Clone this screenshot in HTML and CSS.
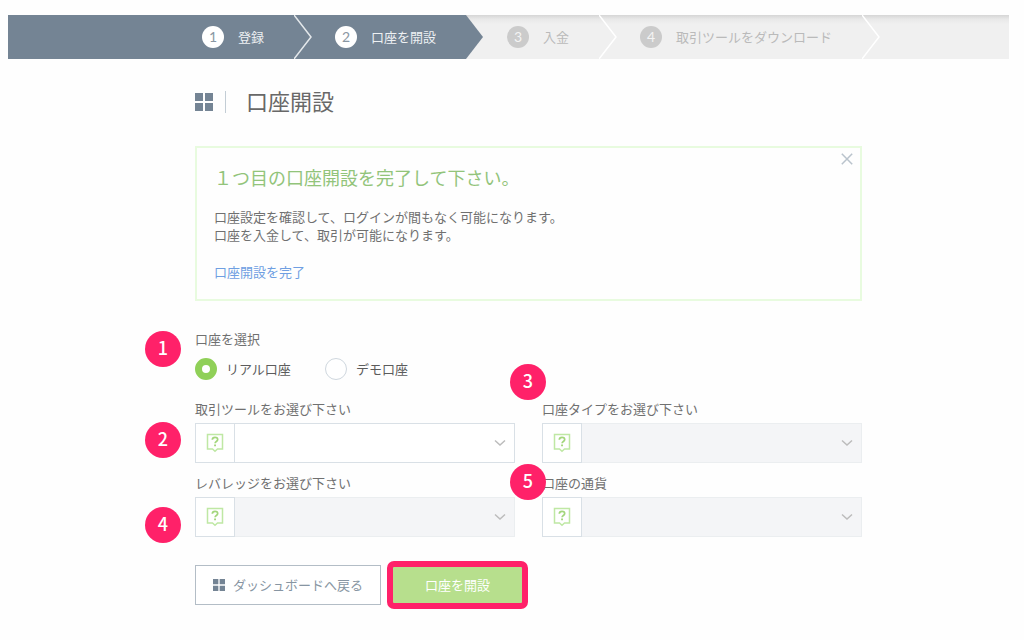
FILE: index.html
```html
<!DOCTYPE html>
<html lang="ja">
<head>
<meta charset="utf-8">
<meta name="viewport" content="width=device-width, initial-scale=1">
<title>口座開設</title>
<link rel="stylesheet" href="styles.css">
</head>
<body>
<svg class="sprite" aria-hidden="true">
  <symbol id="grid" viewBox="0 0 18 18"><path d="M0 0h8v8H0zM10 0h8v8h-8zM0 10h8v8H0zM10 10h8v8h-8z" fill="currentColor"/></symbol>
  <symbol id="help" viewBox="0 0 18 20"><path d="M1.500 1.500h15v14.500h-5L9 18.200 6.500 16h-5z" fill="none" stroke="currentColor" stroke-width="1.500"/><path d="M6.300 6.700C6.400 5.200 7.500 4.400 9 4.400c1.600 0 2.700.8 2.700 2.200 0 2-2.600 1.900-2.600 3.700" fill="none" stroke="#a3d67c" stroke-width="1.700"/><path d="M8.100 11.500h1.900v1.800H8.100z" fill="#a3d67c"/></symbol>
  <symbol id="down" viewBox="0 0 12 8"><path d="M1 1.500l5 4.500 5-4.500" fill="none" stroke="currentColor" stroke-width="1.500"/></symbol>
</svg>

<ol class="stepper">
  <li class="step step-active">
    <span class="step-body"><span class="step-number">1</span>登録</span>
    <svg class="step-arrow" viewBox="0 0 18 44"><path d="M0 0h18v44H0z" fill="#748494"/><path d="M0 0l17 22L0 44" fill="none" stroke="#e4e8eb" stroke-width="1.500"/></svg>
  </li>
  <li class="step step-active">
    <span class="step-body"><span class="step-number">2</span>口座を開設</span>
    <svg class="step-arrow" viewBox="0 0 18 44"><path d="M0 0l17 22L0 44z" fill="#748494"/></svg>
  </li>
  <li class="step">
    <span class="step-body"><span class="step-number">3</span>入金</span>
    <svg class="step-arrow" viewBox="0 0 18 44"><path d="M0 0l17 22L0 44" fill="none" stroke="#fff" stroke-width="1.500"/></svg>
  </li>
  <li class="step">
    <span class="step-body"><span class="step-number">4</span>取引ツールをダウンロード</span>
    <svg class="step-arrow" viewBox="0 0 18 44"><path d="M0 0l17 22L0 44" fill="none" stroke="#fff" stroke-width="1.500"/></svg>
  </li>
</ol>

<main class="content">
  <header class="page-head">
    <span class="head-mark"><svg><use href="#grid"/></svg></span>
    <h1 class="page-title">口座開設</h1>
  </header>

  <section class="notice">
    <h2 class="notice-title">１つ目の口座開設を完了して下さい。</h2>
    <p class="notice-text">口座設定を確認して、ログインが間もなく可能になります。<br>口座を入金して、取引が可能になります。</p>
    <a class="notice-link" href="#account-form">口座開設を完了</a>
    <button class="notice-close" type="button" aria-label="閉じる"><svg viewBox="0 0 12 12"><path d="M.8.8l10.400 10.400M11.200.8L.8 11.200" stroke="currentColor" stroke-width="1.500"/></svg></button>
  </section>

  <form id="account-form">
    <fieldset class="account-kind">
      <legend class="label">口座を選択</legend>
      <div class="radios">
        <label class="radio"><input type="radio" name="kind" checked>リアル口座</label>
        <label class="radio"><input type="radio" name="kind">デモ口座</label>
      </div>
      <span class="marker marker-kind">1</span>
    </fieldset>

    <div class="fields">
      <div class="field">
        <label class="label" for="tool">取引ツールをお選び下さい</label>
        <div class="control">
          <button class="help" type="button" aria-label="ヘルプ"><svg><use href="#help"/></svg></button>
          <select class="select" id="tool"><option></option></select>
          <svg class="caret"><use href="#down"/></svg>
        </div>
        <span class="marker marker-tool">2</span>
      </div>
      <div class="field">
        <label class="label" for="type">口座タイプをお選び下さい</label>
        <div class="control">
          <button class="help" type="button" aria-label="ヘルプ"><svg><use href="#help"/></svg></button>
          <select class="select" id="type" disabled><option></option></select>
          <svg class="caret"><use href="#down"/></svg>
        </div>
        <span class="marker marker-type">3</span>
      </div>
      <div class="field">
        <label class="label" for="leverage">レバレッジをお選び下さい</label>
        <div class="control">
          <button class="help" type="button" aria-label="ヘルプ"><svg><use href="#help"/></svg></button>
          <select class="select" id="leverage" disabled><option></option></select>
          <svg class="caret"><use href="#down"/></svg>
        </div>
        <span class="marker marker-leverage">4</span>
      </div>
      <div class="field">
        <label class="label" for="currency">口座の通貨</label>
        <div class="control">
          <button class="help" type="button" aria-label="ヘルプ"><svg><use href="#help"/></svg></button>
          <select class="select" id="currency" disabled><option></option></select>
          <svg class="caret"><use href="#down"/></svg>
        </div>
        <span class="marker marker-currency">5</span>
      </div>
    </div>

    <div class="actions">
      <button class="back" type="button"><svg><use href="#grid"/></svg>ダッシュボードへ戻る</button>
      <button class="submit" type="submit">口座を開設</button>
    </div>
  </form>
</main>
</body>
</html>
```
FILE: styles.css
```css
* { box-sizing: border-box; }

body {
  margin: 0;
  padding: 15px 15px 0 8px;
  background: #fefefe;
  color: #707070;
  font: 13px/20px "Noto Sans CJK JP", sans-serif;
}

button, select, input { font: inherit; margin: 0; }
svg { display: block; flex: none; }
.sprite { position: absolute; width: 0; height: 0; }

.stepper {
  display: flex;
  margin: 0;
  padding: 0;
  list-style: none;
  overflow: hidden;
  background: linear-gradient(#d6d6d6, #e8e8e8 4px, #f0f0f0 9px);
}
.step { display: flex; flex: none; color: #bababa; }
.step-body {
  display: flex;
  align-items: center;
  gap: 14px;
  height: 44px;
  padding: 0 30px 0 23px;
}
.step:first-child .step-body { padding-left: 194px; }
.step-active { color: #eef1f3; }
.step-active .step-body { background: #748494; }
.step-arrow { width: 18px; height: 44px; }
.step-number {
  width: 22px;
  height: 22px;
  border-radius: 50%;
  background: #cbcbcb;
  color: #f4f4f4;
  font: 14px/22px Lato, sans-serif;
  text-align: center;
}
.step-active .step-number { background: #fff; color: #8a97a3; }

.content { margin: 28px 147px 0 187px; }

.page-head { display: flex; align-items: flex-end; gap: 20px; }
.head-mark {
  display: flex;
  align-items: center;
  height: 22px;
  padding-right: 12px;
  border-right: 1px solid #c3cdd5;
  color: #748494;
}
.head-mark svg { width: 18px; height: 18px; }
.page-title {
  margin: 0;
  color: #686868;
  font-size: 22px;
  font-weight: 400;
  line-height: 26px;
}

.notice {
  position: relative;
  margin-top: 33px;
  padding: 16px 17px 18px;
  border: 2px solid #e8fbdf;
}
.notice-title {
  margin: 0 0 16px;
  color: #92c47a;
  font-size: 18px;
  font-weight: 400;
  line-height: 26px;
}
.notice-text { margin: 0 0 19px; padding-top: 2px; line-height: 18px; }
.notice-link {
  display: block;
  width: max-content;
  color: #6f9fe2;
  line-height: 18px;
  text-decoration: none;
}
.notice-close {
  position: absolute;
  top: 5px;
  right: 7px;
  padding: 0;
  border: 0;
  background: none;
  color: #b9c3cc;
}
.notice-close svg { width: 12px; height: 12px; }

.account-kind {
  position: relative;
  margin: 28px 0 19px;
  padding: 0;
  border: 0;
}
.label { display: block; padding: 0; }
.radios { display: flex; gap: 34px; margin-top: 9px; }
.radio { display: flex; align-items: center; gap: 9px; color: #5c5c5c; }
.radio input {
  width: 22px;
  height: 22px;
  border: 1px solid #cfd7de;
  border-radius: 50%;
  background: #fff;
  appearance: none;
}
.radio input:checked { border: 7px solid #90d058; }

.fields {
  display: grid;
  grid-template-columns: 1fr 1fr;
  gap: 10px 27px;
}
.field { position: relative; }
.control {
  display: grid;
  grid-template-columns: 40px 1fr;
  align-items: center;
  height: 40px;
  margin-top: 4px;
}
.help {
  display: grid;
  place-items: center;
  height: 40px;
  padding: 0;
  border: 1px solid #d9e0e6;
  background: #fff;
  color: #bfe8a4;
}
.help svg { width: 18px; height: 20px; }
.select {
  grid-area: 1 / 2;
  width: 100%;
  height: 40px;
  border: 1px solid #d9e0e6;
  border-left: 0;
  border-radius: 0;
  background: #fff;
  appearance: none;
}
.select:disabled { border-color: #ebeef0; background: #f4f5f7; opacity: 1; }
.caret {
  grid-area: 1 / 2;
  justify-self: end;
  width: 12px;
  height: 8px;
  margin-right: 9px;
  color: #bcbcbc;
  pointer-events: none;
}

.marker {
  position: absolute;
  left: -50px;
  width: 36px;
  height: 36px;
  border-radius: 50%;
  background: #ff2169;
  color: #fff;
  font-size: 18px;
  font-weight: 500;
  line-height: 32px;
  text-align: center;
}
.marker-kind { top: -18px; }
.marker-tool { top: 23px; }
.marker-type { top: -35px; left: -32px; }
.marker-leverage { top: 34px; }
.marker-currency { top: -9px; left: -32px; }

.actions { display: flex; align-items: center; gap: 6px; margin-top: 24px; }
.back {
  display: flex;
  align-items: center;
  gap: 8px;
  height: 40px;
  padding: 0 17px;
  border: 1px solid #b3bdc6;
  background: #fff;
  color: #8795a2;
}
.back svg { width: 12px; height: 12px; color: #748494; }
.submit {
  height: 48px;
  padding: 0 32px;
  border: 6px solid #ff2169;
  border-radius: 7px;
  background: #b7df8d;
  color: #fff;
}
```
